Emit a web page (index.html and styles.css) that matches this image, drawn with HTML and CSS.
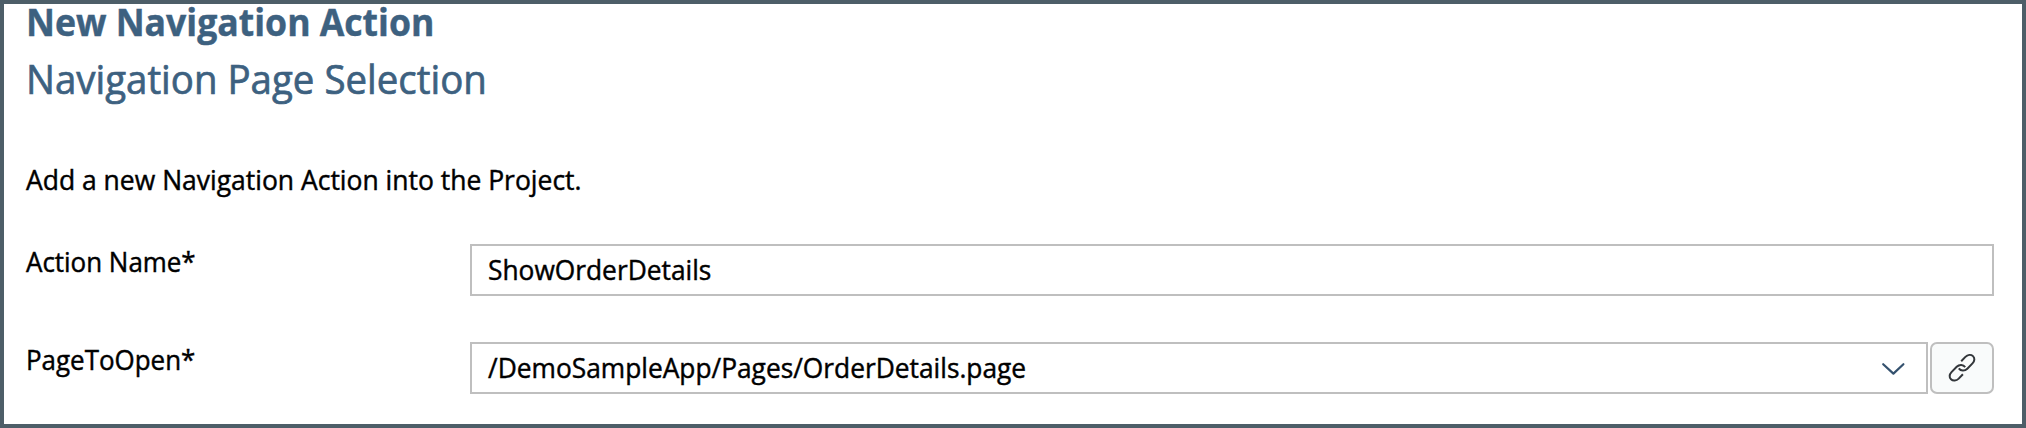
FILE: index.html
```
<!DOCTYPE html>
<html lang="en">
<head>
<meta charset="utf-8">
<title>New Navigation Action</title>
<link rel="stylesheet" href="styles.css">
</head>
<body>
<main class="wizard">
  <h1 class="title"><span class="fit">New Navigation Action</span></h1>
  <h2 class="subtitle"><span class="fit">Navigation Page Selection</span></h2>
  <p class="description"><span class="fit">Add a new Navigation Action into the Project.</span></p>
  <div class="row">
    <div class="label"><span class="fit">Action Name*</span></div>
    <div class="field"><span class="fit">ShowOrderDetails</span></div>
  </div>
  <div class="row">
    <div class="label"><span class="fit">PageToOpen*</span></div>
    <div class="field combo">
      <span class="fit">/DemoSampleApp/Pages/OrderDetails.page</span>
      <svg class="chevron" viewBox="0 0 24 14"><path d="M2.2 2.2 12.4 11.6 22.4 2.2"/></svg>
    </div>
    <div class="link-button">
      <svg class="link-icon" viewBox="0 0 28 30"><path d="M13.2 8.2 17.4 3.9C19.7 1.6 23 1.2 25 3.1S26.7 8.100 24.500 10.400L19.300 15.700C16.700 18.300 12.800 18.100 10.800 15.300M14.900 21.200 10.700 25.600C8.400 27.900 5 28.200 3 26.300S1.300 21.400 3.500 19.100L8.700 13.800C11.300 11.200 15.200 11.400 17.200 14.100"/></svg>
    </div>
  </div>
</main>
</body>
</html>
```
FILE: styles.css
```
* { box-sizing: border-box; }
body { margin: 0; background: #fff; }
.wizard {
  height: 428px;
  padding: 0 28px 0 22px;
  border: 4px solid #4d5e68;
  font-family: "Open Sans", "Noto Sans", sans-serif;
  font-size: 27.5px;
  color: #000;
  white-space: nowrap;
  -webkit-text-stroke: .45px;
}
.fit { display: inline-block; transform-origin: 0 50%; transform: scaleX(.957); }
.title, .subtitle, .description { margin: 0; }
.title { font-size: 37.5px; line-height: 35px; font-weight: 700; color: #3d6180; }
.title .fit { transform: scaleX(.949); }
.subtitle { font-size: 39.5px; line-height: 81px; font-weight: 400; color: #3d6180; -webkit-text-stroke: .7px; }
.subtitle .fit { transform: scaleX(.973); }
.description { margin-top: 40px; line-height: 40px; }
.description .fit { transform: scaleX(.963); }
.row {
  display: grid;
  grid-template-columns: 444px 1fr auto;
  height: 52px;
  margin-top: 44px;
}
.row + .row { margin-top: 46px; }
.label { line-height: 36px; }
.label .fit { transform: scaleX(.943); }
.field { border: 2px solid #bfbfbf; padding-left: 16px; line-height: 47px; }
.combo { display: flex; justify-content: space-between; padding-right: 21px; }
.chevron { width: 24px; height: 14px; margin-top: 18px; fill: none; stroke: #34516e; stroke-width: 2.200; stroke-linecap: round; stroke-linejoin: round; }
.link-button {
  display: flex;
  align-items: center;
  justify-content: center;
  width: 64px;
  margin-left: 2px;
  border: 2px solid #bfbfbf;
  border-radius: 7px;
  background: #f9fbfb;
}
.link-icon { width: 28px; height: 30px; fill: none; stroke: #32363a; stroke-width: 2; }
```
